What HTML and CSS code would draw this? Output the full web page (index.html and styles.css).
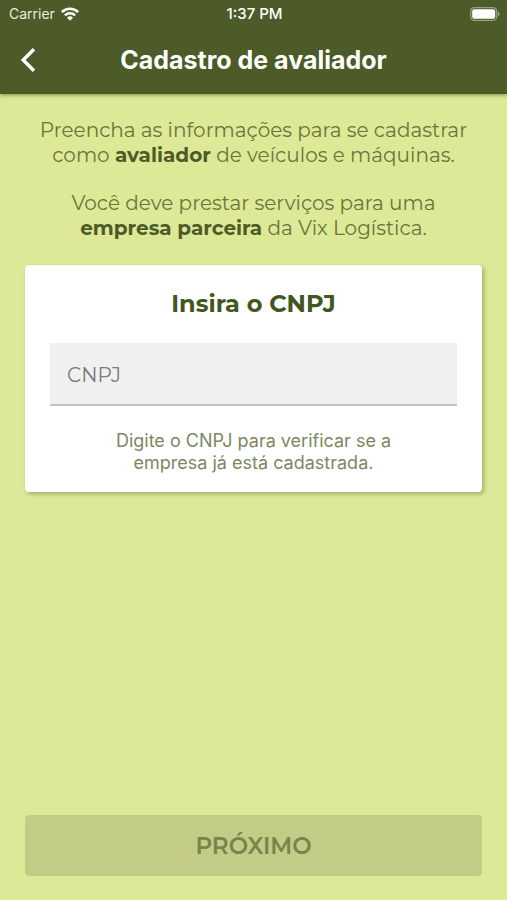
FILE: index.html
```html
<!DOCTYPE html>
<html lang="pt-BR">
<head>
<meta charset="utf-8">
<meta name="viewport" content="width=device-width, initial-scale=1">
<title>Cadastro de avaliador</title>
<link rel="stylesheet" href="styles.css">
</head>
<body>
<header class="top">
  <div class="status">
    <div class="carrier">
      <span>Carrier</span>
      <svg width="18" height="14" viewBox="0 0 18 14" aria-hidden="true">
        <g fill="none" stroke="#fff" stroke-width="2.5">
          <path d="M.9 5.1a11.5 11.5 0 0 1 16.2 0"/>
          <path d="M3.9 8.3a7.2 7.2 0 0 1 10.2 0"/>
        </g>
        <path d="M9 13.8l3-3.1a4.3 4.3 0 0 0-6 0z" fill="#fff"/>
      </svg>
    </div>
    <time>1:37 PM</time>
    <svg class="battery" width="30" height="14" viewBox="0 0 30 14" aria-hidden="true">
      <rect x=".7" y=".7" width="26" height="12.6" rx="3.6" fill="none" stroke="#fff" stroke-opacity=".42" stroke-width="1.3"/>
      <rect x="2.2" y="2.2" width="23" height="9.6" rx="2" fill="#fff"/>
      <path d="M28 4.6c2 1 2 3.8 0 4.8z" fill="#fff" fill-opacity=".48"/>
    </svg>
  </div>
  <div class="bar">
    <button class="back" type="button" aria-label="Voltar">
      <svg width="16" height="24" viewBox="0 0 16 24" aria-hidden="true">
        <path d="M14 1.3L3.2 12 14 22.7" fill="none" stroke="#fff" stroke-width="3.4"/>
      </svg>
    </button>
    <h1>Cadastro de avaliador</h1>
  </div>
</header>
<main>
  <div class="intro">
    <p>Preencha as informações para se cadastrar<br>como <strong>avaliador</strong> de veículos e máquinas.</p>
    <p>Você deve prestar serviços para uma<br><strong>empresa parceira</strong> da Vix Logística.</p>
  </div>
  <section class="card">
    <h2><label for="cnpj">Insira o CNPJ</label></h2>
    <input id="cnpj" type="text" inputmode="numeric" placeholder="CNPJ">
    <p class="hint">Digite o CNPJ para verificar se a<br>empresa já está cadastrada.</p>
  </section>
  <button class="next" type="button" disabled>PRÓXIMO</button>
</main>
</body>
</html>
```
FILE: styles.css
```css
* { box-sizing: border-box; }

body {
  margin: 0;
  min-height: 100vh;
  display: flex;
  flex-direction: column;
  background: #dde996;
  color: #4c5b27;
  font-family: Montserrat, Inter, "Liberation Sans", sans-serif;
}

h1, h2, p { margin: 0; }

.top {
  position: relative;
  background: #4c5b27;
  color: #fff;
  font-family: Inter, "Liberation Sans", sans-serif;
  box-shadow: 0 1px 4px rgba(60, 75, 20, .6);
}

.status {
  display: grid;
  grid-template-columns: 1fr auto 1fr;
  align-items: center;
  height: 27px;
  padding: 0 7px 0 9px;
  font-size: 15px;
}

.carrier {
  display: flex;
  align-items: center;
  gap: 6px;
  font-size: 14px;
  color: #e9ecdf;
}

.status time { font-weight: 500; }

.battery { justify-self: end; }

.bar {
  display: grid;
  grid-template-columns: 56px 1fr 56px;
  align-items: center;
  height: 67px;
  padding-bottom: 2px;
}

.back {
  display: flex;
  justify-content: center;
  padding: 8px;
  border: 0;
  background: none;
}

h1 {
  font-size: 25px;
  line-height: 32px;
  font-weight: 700;
  text-align: center;
}

main {
  flex: 1;
  display: flex;
  flex-direction: column;
  padding: 24px 25px;
}

.intro {
  display: grid;
  gap: 23px;
  font-size: 20px;
  line-height: 25px;
  text-align: center;
  color: #68763a;
}

.intro p { white-space: nowrap; justify-self: center; }

.intro strong { font-weight: 700; color: #4c5b27; }

.card {
  margin-top: 24px;
  padding: 24px 25px 18px;
  border-radius: 4px;
  background: #fff;
  box-shadow: 2px 2px 4px rgba(70, 80, 30, .4);
  text-align: center;
}

h2 {
  font-size: 24px;
  line-height: 30px;
  font-weight: 700;
  color: #44561f;
}

input {
  display: block;
  width: 100%;
  height: 63px;
  margin-top: 24px;
  padding: 2px 17px 0;
  border: 0;
  border-bottom: 2px solid #c3c3c3;
  border-radius: 0;
  background: #f0f0f0;
  color: #4c5b27;
  font: inherit;
  font-size: 20px;
}

input::placeholder { color: #7b7b7b; opacity: 1; }

.hint {
  margin-top: 24px;
  font-family: Inter, "Liberation Sans", sans-serif;
  font-size: 18px;
  line-height: 22px;
  color: #7c8860;
}

.next {
  height: 61px;
  margin-top: auto;
  border: 0;
  border-radius: 4px;
  background: #c2cc86;
  color: #77844b;
  font: inherit;
  font-size: 23px;
  font-weight: 600;
}
```
